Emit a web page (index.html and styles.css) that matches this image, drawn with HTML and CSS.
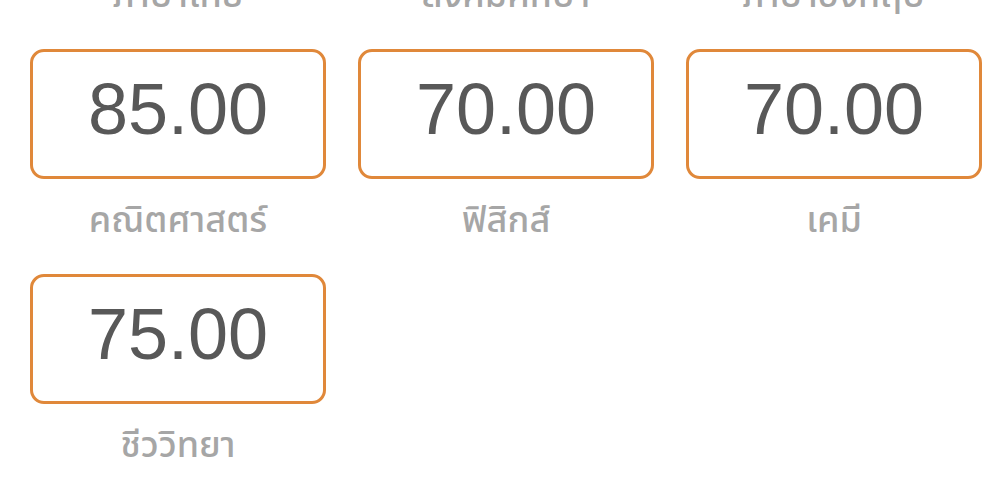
FILE: index.html
```html
<!DOCTYPE html>
<html lang="th">
<head>
<meta charset="utf-8">
<title>ผลการเรียน</title>
<link rel="stylesheet" href="styles.css">
</head>
<body>
<div class="score-grid">
    <div class="score-item">
        <div class="score-box">80.00</div>
        <p class="score-label">ภาษาไทย</p>
    </div>
    <div class="score-item">
        <div class="score-box">75.00</div>
        <p class="score-label">สังคมศึกษา</p>
    </div>
    <div class="score-item">
        <div class="score-box">80.00</div>
        <p class="score-label">ภาษาอังกฤษ</p>
    </div>
    <div class="score-item">
        <div class="score-box">85.00</div>
        <p class="score-label">คณิตศาสตร์</p>
    </div>
    <div class="score-item">
        <div class="score-box">70.00</div>
        <p class="score-label">ฟิสิกส์</p>
    </div>
    <div class="score-item">
        <div class="score-box">70.00</div>
        <p class="score-label">เคมี</p>
    </div>
    <div class="score-item">
        <div class="score-box">75.00</div>
        <p class="score-label">ชีววิทยา</p>
    </div>
</div>
</body>
</html>
```

FILE: styles.css
```css
html, body {
    margin: 0;
    background-color: #fff;
    font-family: "Liberation Sans", "Noto Sans Thai", "Noto Sans", sans-serif;
    overflow: hidden;
}

.score-grid {
    display: grid;
    grid-template-columns: repeat(3, 296px);
    column-gap: 32px;
    row-gap: 33px;
    padding: 0 25px 0 30px;
    margin-top: -176px;
}

.score-item {
    display: flex;
    flex-direction: column;
    align-items: center;
}

.score-box {
    box-sizing: border-box;
    width: 100%;
    height: 130px;
    border: 3px solid #e0883a;
    border-radius: 14px;

    display: flex;
    justify-content: center;
    align-items: center;
    padding-bottom: 11px;

    font-size: 72px;
    line-height: 1;
    color: #585858;
}

.score-label {
    margin: 22px 0 0;
    height: 40px;
    line-height: 40px;
    font-family: "Noto Sans Thai", "Noto Sans", sans-serif;
    font-size: 36px;
    font-weight: 500;
    color: #a6a6a6;
}
```
